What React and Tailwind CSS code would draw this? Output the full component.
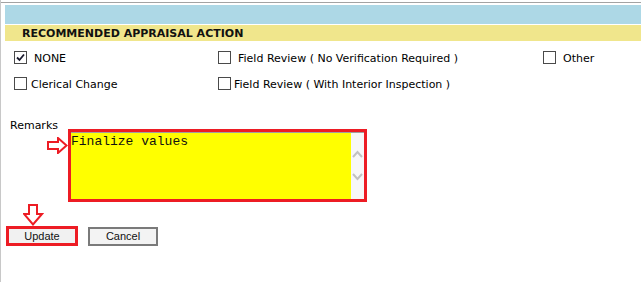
import React from 'react';

function Box({ checked }) {
  return (
    <span className="inline-flex w-[13px] h-[13px] border border-[#4a4a4a] bg-white items-center justify-center shrink-0">
      {checked && (
        <svg width="11" height="11" viewBox="0 0 11 11">
          <polyline points="2,5.5 4.5,8 9,2.5" fill="none" stroke="#1a1a2e" strokeWidth="1.8" />
        </svg>
      )}
    </span>
  );
}

function Opt({ checked, gap, children }) {
  return (
    <div className="flex items-center h-[13px]">
      <Box checked={checked} />
      <span className={gap + ' whitespace-pre leading-[13px] pt-[2px]'}>{children}</span>
    </div>
  );
}

export default function App() {
  return (
    <div className="w-[641px] h-[282px] bg-white border-l border-[#c8c8c8] overflow-hidden font-['DejaVu_Sans',Verdana,sans-serif] text-[11px] text-black">
      <div className="h-[2px]" />
      <div className="h-px bg-[#a3a3a3]" />
      <div className="h-[2px]" />
      <div className="ml-[4px] h-[19px] bg-[#add8e6]" />
      <div className="h-px" />
      <div className="ml-[4px] h-[16px] bg-[#f0e68c] pl-[17px] font-bold leading-[17px] text-[#111]">
        RECOMMENDED APPRAISAL ACTION
      </div>

      <div className="pl-[13px] pt-[10px] grid grid-cols-[204px_325px_auto] gap-y-[13px]">
        <Opt checked gap="ml-[7px]">NONE</Opt>
        <Opt gap="ml-[7px]">Field Review ( No Verification Required )</Opt>
        <Opt gap="ml-[7px]">Other</Opt>
        <Opt gap="ml-[4px]">Clerical Change</Opt>
        <Opt gap="ml-[3px]">Field Review ( With Interior Inspection )</Opt>
        <div />
      </div>

      <div className="mt-[29px] pl-[9px] h-[10px] leading-[13px]">Remarks</div>

      <div className="flex items-start">
        <svg className="ml-[46px] mt-[8px]" width="21" height="17" viewBox="0 0 21 17">
          <path d="M1 5 H11 V1 L19.5 8.5 L11 16 V12 H1 Z" fill="white" stroke="#ed1c24" strokeWidth="2" />
        </svg>
        <div className="w-[299px] h-[73px] border-[3px] border-[#ed1c24] flex flex-col">
          <div className="h-px bg-[#a0a0a0]" />
          <div className="flex flex-1">
            <div className="flex-1 bg-[#ffff00] font-['Liberation_Mono',monospace] text-[13px] leading-[15px] pt-[1px] text-[#111]">
              Finalize values
            </div>
            <div className="w-[13px] bg-[#f7f7f7] flex flex-col items-center pt-[17px] gap-[15px]">
              <svg width="11" height="8" viewBox="0 0 11 8">
                <polyline points="1,7 5.5,2 10,7" fill="none" stroke="#c2c2c2" strokeWidth="2" />
              </svg>
              <svg width="11" height="8" viewBox="0 0 11 8">
                <polyline points="1,1 5.5,6 10,1" fill="none" stroke="#c2c2c2" strokeWidth="2" />
              </svg>
            </div>
          </div>
        </div>
      </div>

      <svg className="ml-[22px] mt-[2px] block" width="21" height="22" viewBox="0 0 21 22">
        <path d="M6 1 H14 V10 H19 L10 20.5 L1 10 H6 Z" fill="white" stroke="#ed1c24" strokeWidth="2" />
      </svg>

      <div className="flex items-start ml-[5px] font-['Liberation_Sans',Arial,sans-serif] text-[11px]">
        <div className="w-[72px] h-[20px] border-[3px] border-[#ed1c24] bg-[#f1f1f1] flex items-center justify-center text-[#111]">
          Update
        </div>
        <div className="ml-[10px] mt-px w-[70px] h-[19px] border-2 border-[#7a7a7a] bg-[#f3f3f3] flex items-center justify-center text-[#111]">
          Cancel
        </div>
      </div>
    </div>
  );
}
